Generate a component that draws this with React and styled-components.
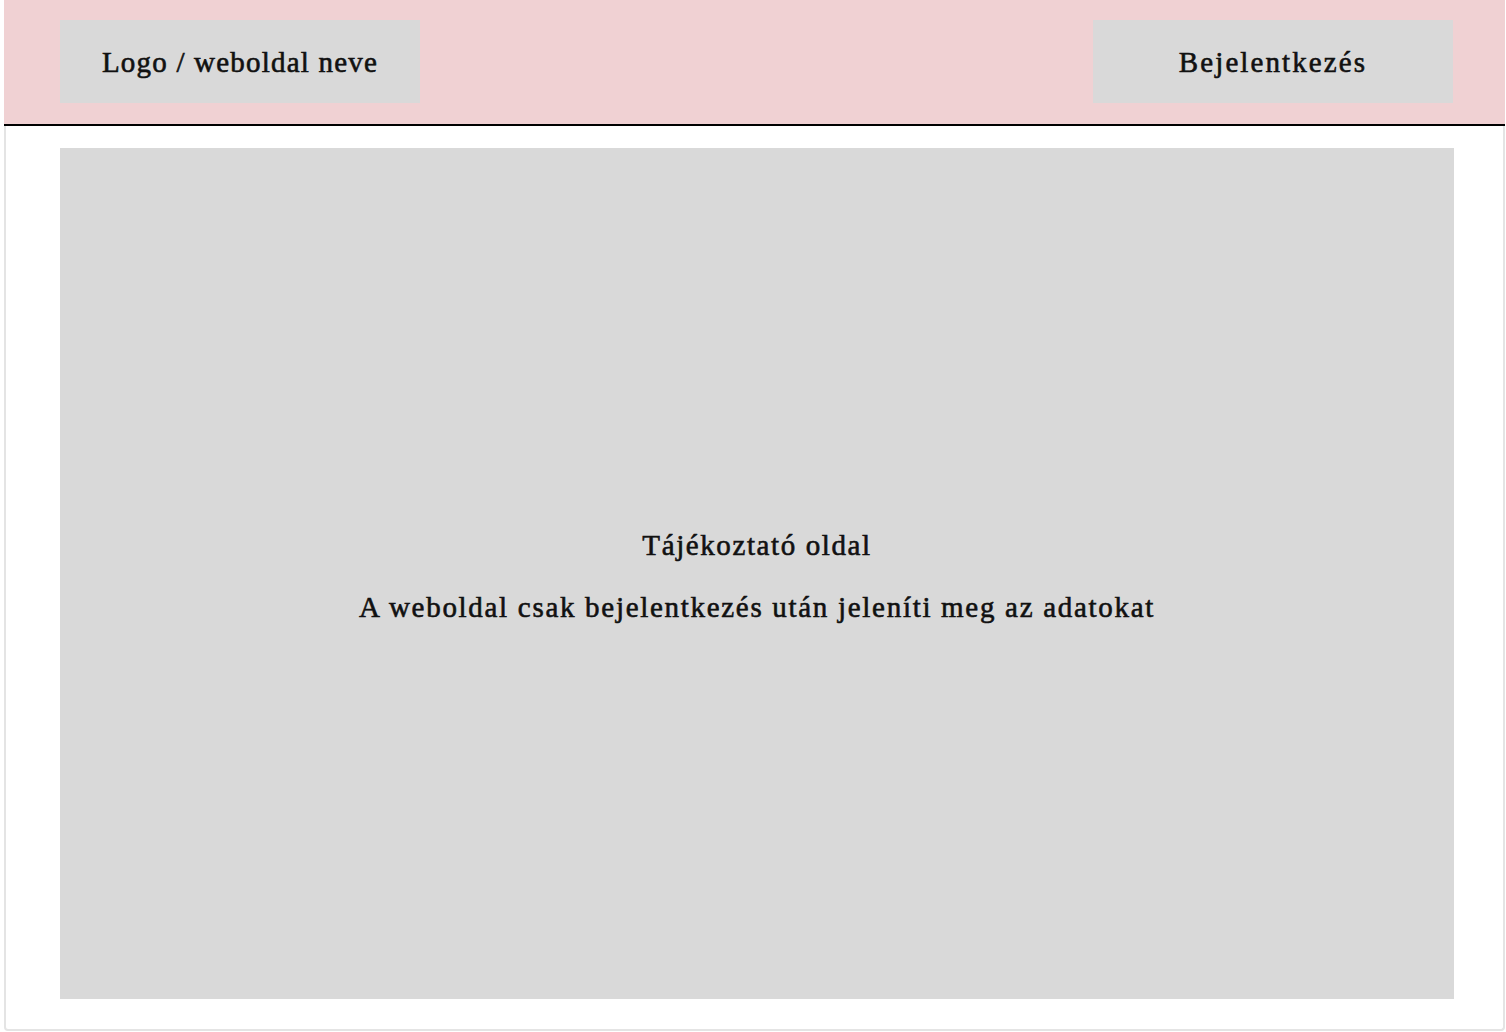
import React from "react";
import styled, { createGlobalStyle } from "styled-components";

const GlobalStyle = createGlobalStyle`
  html, body {
    margin: 0;
    padding: 0;
    background: #ffffff;
  }

  body {
    font-family: "Liberation Serif", "DejaVu Serif", serif;
    color: #111111;
  }
`;

const Frame = styled.div`
  box-sizing: border-box;
  margin-left: 4px;
  width: 1501px;
  height: 1031px;
  display: flex;
  flex-direction: column;
  border: 2px solid #e4e4e4;
  border-top: none;
  border-radius: 0 0 4px 4px;
`;

const Header = styled.header`
  box-sizing: border-box;
  height: 126px;
  margin: 0 -2px;
  padding: 20px 52px 21px 56px;
  display: flex;
  justify-content: space-between;
  align-items: stretch;
  background: #f0d1d3;
  border-bottom: 2px solid #000000;
`;

const HeaderBox = styled.div`
  width: ${({ $width }) => $width}px;
  display: flex;
  align-items: center;
  justify-content: center;
  padding-top: 2px;
  background: #d9d9d9;
  font-size: 29px;
  letter-spacing: ${({ $spacing }) => $spacing}px;
  -webkit-text-stroke: 0.6px #111111;
`;

const Main = styled.main`
  flex: 1;
  padding: 22px 49px 30px 54px;
  display: flex;
`;

const InfoPanel = styled.section`
  flex: 1;
  display: flex;
  flex-direction: column;
  align-items: center;
  justify-content: center;
  gap: 24px;
  padding-top: 4px;
  background: #d9d9d9;
`;

const InfoText = styled.p`
  margin: 0;
  font-size: 29px;
  line-height: 38px;
  letter-spacing: ${({ $spacing }) => $spacing}px;
  -webkit-text-stroke: 0.6px #111111;
`;

export default function App() {
  return (
    <>
      <GlobalStyle />
      <Frame>
        <Header>
          <HeaderBox $width={360} $spacing={1.2}>Logo / weboldal neve</HeaderBox>
          <HeaderBox $width={360} $spacing={2.1}>Bejelentkezés</HeaderBox>
        </Header>
        <Main>
          <InfoPanel>
            <InfoText $spacing={1.6}>Tájékoztató oldal</InfoText>
            <InfoText $spacing={1.7}>A weboldal csak bejelentkezés után jeleníti meg az adatokat</InfoText>
          </InfoPanel>
        </Main>
      </Frame>
    </>
  );
}
